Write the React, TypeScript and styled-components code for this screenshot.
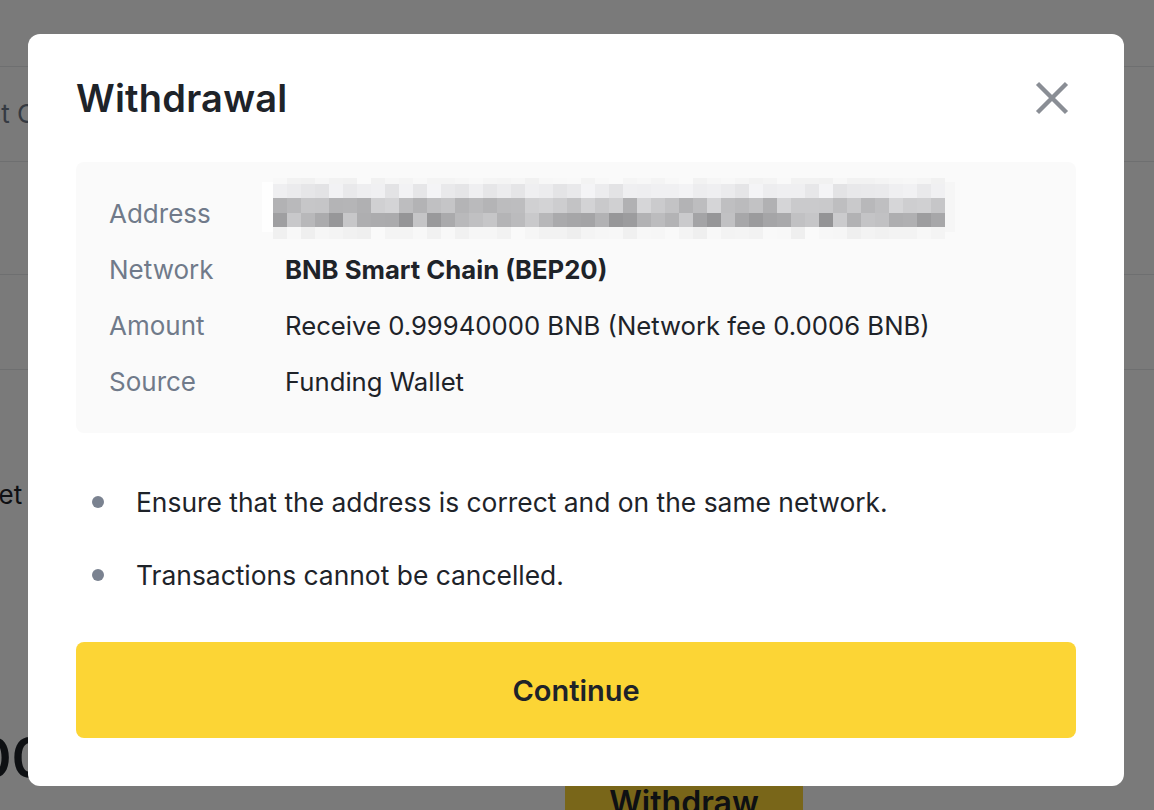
import React from "react";
import styled, { createGlobalStyle } from "styled-components";

const GlobalStyle = createGlobalStyle`
  html, body { margin: 0; padding: 0; }
  body {
    width: 1154px;
    height: 810px;
    overflow: hidden;
    font-family: Inter, "Noto Sans", sans-serif;
    -webkit-font-smoothing: antialiased;
  }
  * { box-sizing: border-box; }
`;

/* ---------- page behind the dialog ---------- */

const BackPage = styled.div`
  width: 1154px;
  height: 810px;
  overflow: hidden;
  background: #ffffff;
  display: flex;
  flex-direction: column;
  font-family: Inter, "Noto Sans", sans-serif;
`;

const BackRow = styled.div<{ $h: number; $line?: boolean; $top?: number }>`
  height: ${(p) => p.$h}px;
  flex: none;
  display: flex;
  align-items: ${(p) => (p.$top !== undefined ? "flex-start" : "center")};
  padding-top: ${(p) => p.$top ?? 0}px;
  border-bottom: ${(p) => (p.$line ? "1px solid #e6e8ea" : "none")};
`;

const BackText = styled.span<{ $shift: number; $muted?: boolean }>`
  margin-left: ${(p) => p.$shift}px;
  font-size: 26px;
  line-height: 36px;
  white-space: nowrap;
  color: ${(p) => (p.$muted ? "#707a8a" : "#1e2329")};
`;

const BackFooter = styled.div`
  flex: 1;
  display: flex;
  align-items: flex-start;
`;

const BackAmount = styled.span`
  margin: 24px 0 0 -77px;
  font-size: 56px;
  font-weight: 600;
  line-height: 68px;
  color: #1e2329;
  white-space: nowrap;
  width: 642px;
  flex: none;
`;

const BackButton = styled.div`
  margin-top: 70px;
  width: 238px;
  height: 64px;
  flex: none;
  background: #fcd535;
  border-radius: 6px;
  display: flex;
  align-items: center;
  justify-content: center;
  font-size: 32px;
  font-weight: 600;
  color: #1e2329;
`;

/* ---------- dialog ---------- */

const Overlay = styled.div`
  position: fixed;
  inset: 0;
  background: rgba(0, 0, 0, 0.52);
  display: flex;
  justify-content: flex-start;
  align-items: flex-start;
  padding: 34px 0 0 28px;
`;

const Modal = styled.div`
  width: 1096px;
  background: #ffffff;
  border-radius: 12px;
  padding: 40px 48px 48px;
  display: flex;
  flex-direction: column;
  font-family: Inter, "Noto Sans", sans-serif;
  color: #1e2329;
`;

const Header = styled.div`
  height: 48px;
  display: flex;
  align-items: center;
  justify-content: space-between;
`;

const Title = styled.h2`
  margin: 0;
  font-size: 38px;
  line-height: 48px;
  font-weight: 600;
  color: #1e2329;
  letter-spacing: 0.2px;
`;

const CloseButton = styled.button`
  width: 48px;
  height: 48px;
  padding: 0;
  border: 0;
  background: none;
  display: flex;
  align-items: center;
  justify-content: center;
  cursor: pointer;
`;

const InfoBox = styled.div`
  margin-top: 40px;
  background: #fafafa;
  border-radius: 8px;
  padding: 34px 33px 33px;
  display: flex;
  flex-direction: column;
  gap: 20px;
`;

const InfoRow = styled.div`
  height: 36px;
  display: flex;
  align-items: center;
`;

const Label = styled.div`
  width: 176px;
  flex: none;
  font-size: 26px;
  line-height: 36px;
  color: #707a8a;
`;

const Value = styled.div<{ $strong?: boolean }>`
  font-size: 25.7px;
  line-height: 36px;
  font-weight: ${(p) => (p.$strong ? 700 : 400)};
  color: #1e2329;
  white-space: nowrap;
`;

const BlurredAddress = styled.svg`
  display: block;
  margin: -18px 0 -11px -23px;
  flex: none;
`;

const Notes = styled.ul`
  margin: 51px 0 0;
  padding: 0 0 0 16px;
  list-style: none;
  display: flex;
  flex-direction: column;
  gap: 37px;
`;

const Note = styled.li`
  display: flex;
  align-items: center;
  font-size: 26.4px;
  line-height: 36px;
  color: #1e2329;
`;

const Dot = styled.span`
  width: 12px;
  height: 12px;
  border-radius: 50%;
  background: #7a8290;
  margin-right: 32px;
  flex: none;
`;

const PrimaryButton = styled.button`
  margin-top: 49px;
  height: 96px;
  width: 100%;
  border: 0;
  border-radius: 8px;
  background: #fcd535;
  font-family: Inter, "Noto Sans", sans-serif;
  font-size: 29px;
  font-weight: 600;
  color: #1e2329;
  cursor: pointer;
`;

/* ---------- pixelated address drawing ---------- */

function makeBlocks() {
  let seed = 17;
  const rnd = () => {
    seed = (seed * 1103515245 + 12345) % 2147483648;
    return seed / 2147483648;
  };
  const cols = 48;
  const bw = 14;
  const rows = [
    { y: 6, h: 14, lo: 226, hi: 244 },
    { y: 20, h: 15, lo: 176, hi: 214 },
    { y: 35, h: 14, lo: 148, hi: 204 },
  ];
  const out: { x: number; y: number; w: number; h: number; c: string }[] = [];
  rows.forEach((r) => {
    for (let i = 0; i < cols; i++) {
      const v = Math.round(r.lo + (r.hi - r.lo) * rnd());
      out.push({ x: 11 + i * bw, y: r.y, w: bw, h: r.h, c: `rgb(${v},${v},${v + 2})` });
    }
  });
  for (let i = 0; i < cols; i++) {
    const v = Math.round(238 + 12 * rnd());
    out.push({ x: 11 + i * bw, y: 49, w: bw, h: 12, c: `rgb(${v},${v},${v})` });
    const t = Math.round(240 + 10 * rnd());
    out.push({ x: 11 + i * bw, y: 0, w: bw, h: 6, c: `rgb(${t},${t},${t})` });
  }
  return out;
}

const blocks = makeBlocks();

const details = [
  { label: "Network", value: "BNB Smart Chain (BEP20)", strong: true },
  { label: "Amount", value: "Receive 0.99940000 BNB (Network fee 0.0006 BNB)" },
  { label: "Source", value: "Funding Wallet" },
];

const notes = [
  "Ensure that the address is correct and on the same network.",
  "Transactions cannot be cancelled.",
];

export default function App() {
  return (
    <>
      <GlobalStyle />
      <BackPage>
        <BackRow $h={67} $line />
        <BackRow $h={95} $line>
          <BackText $shift={-67} $muted>
            Select Coin
          </BackText>
        </BackRow>
        <BackRow $h={113} $line />
        <BackRow $h={95} $line />
        <BackRow $h={330} $top={107}>
          <BackText $shift={-53}>Wallet</BackText>
        </BackRow>
        <BackFooter>
          <BackAmount>0.00</BackAmount>
          <BackButton>Withdraw</BackButton>
        </BackFooter>
      </BackPage>

      <Overlay>
        <Modal role="dialog" aria-label="Withdrawal">
          <Header>
            <Title>Withdrawal</Title>
            <CloseButton aria-label="Close">
              <svg width="48" height="48" viewBox="0 0 48 48">
                <path
                  d="M9.5 9.5 L38.5 38.5 M38.5 9.5 L9.5 38.5"
                  stroke="#8a8e95"
                  strokeWidth="4.4"
                  strokeLinecap="butt"
                  fill="none"
                />
              </svg>
            </CloseButton>
          </Header>

          <InfoBox>
            <InfoRow>
              <Label>Address</Label>
              <BlurredAddress width="693" height="65" viewBox="0 0 693 65">
                <rect x="0" y="4" width="11" height="50" fill="#ffffff" opacity="0.8" />
                {blocks.map((b, i) => (
                  <rect key={i} x={b.x} y={b.y} width={b.w} height={b.h} fill={b.c} />
                ))}
                <rect x="683" y="4" width="10" height="50" fill="#f6f6f6" />
              </BlurredAddress>
            </InfoRow>
            {details.map((d) => (
              <InfoRow key={d.label}>
                <Label>{d.label}</Label>
                <Value $strong={d.strong}>{d.value}</Value>
              </InfoRow>
            ))}
          </InfoBox>

          <Notes>
            {notes.map((n) => (
              <Note key={n}>
                <Dot />
                {n}
              </Note>
            ))}
          </Notes>

          <PrimaryButton>Continue</PrimaryButton>
        </Modal>
      </Overlay>
    </>
  );
}
